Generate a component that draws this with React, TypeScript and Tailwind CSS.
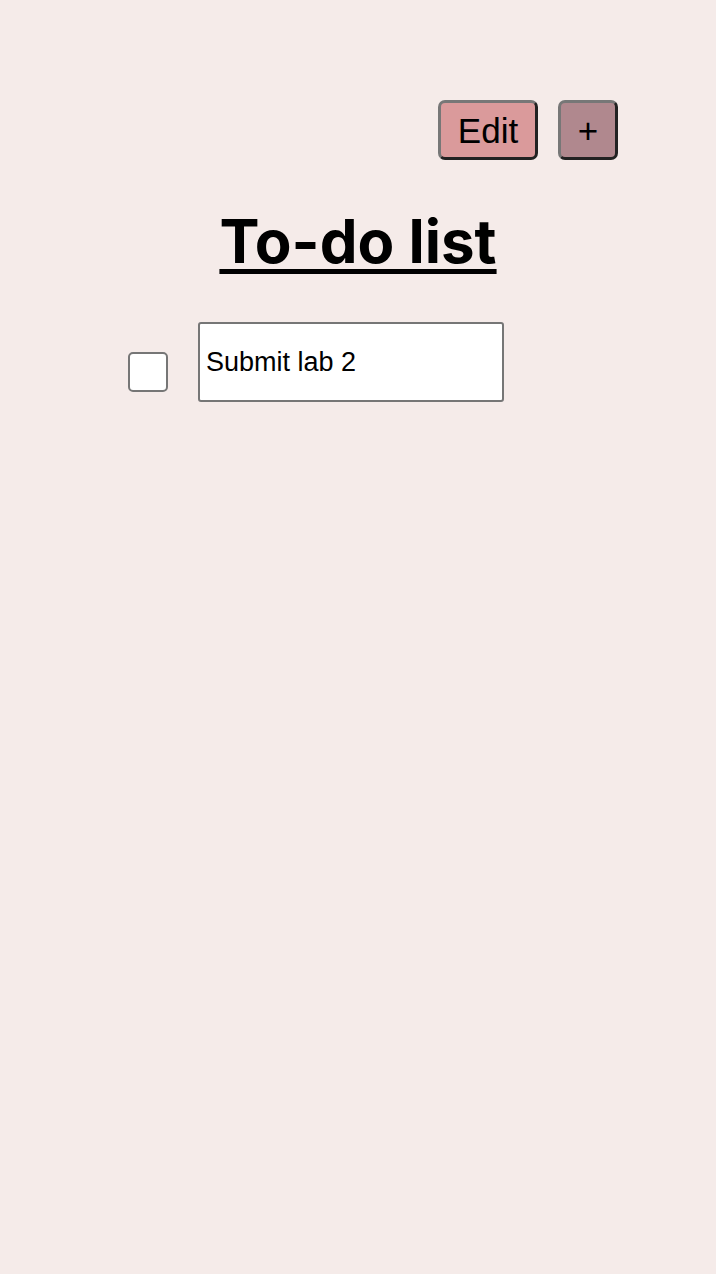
export default function App() {
    return (
        <div className="min-h-[1274px] w-full bg-[#f5ebe9] font-['Liberation_Sans',Arial,sans-serif] text-black">
            {/* Toolbar */}
            <div className="flex justify-end gap-5 pt-[100px] pr-[98px]">
                <button className="h-[60px] w-[100px] rounded-[7px] border-[3px] border-t-[#777] border-l-[#777] border-b-[#222] border-r-[#222] bg-[#da9a9b] text-[35px] leading-none">
                    Edit
                </button>
                <button className="h-[60px] w-[60px] rounded-[7px] border-[3px] border-t-[#777] border-l-[#777] border-b-[#222] border-r-[#222] bg-[#b0888e] text-[35px] leading-none">
                    +
                </button>
            </div>

            {/* Title */}
            <h1 className="mt-[41px] text-center font-['Inter',sans-serif] text-[60px] font-bold leading-[80px] underline decoration-[5px] underline-offset-[6px]">
                To-do list
            </h1>

            {/* Items */}
            <div className="mt-[41px] flex items-center gap-[30px] pl-[128px]">
                <div className="mt-[20px] h-10 w-10 rounded-[5px] border-2 border-[#767676] bg-white" />
                <input
                    defaultValue="Submit lab 2"
                    className="h-20 w-[306px] rounded-[3px] border-2 border-[#767676] bg-white px-[6px] text-[27px] outline-none"
                />
            </div>
        </div>
    );
}
